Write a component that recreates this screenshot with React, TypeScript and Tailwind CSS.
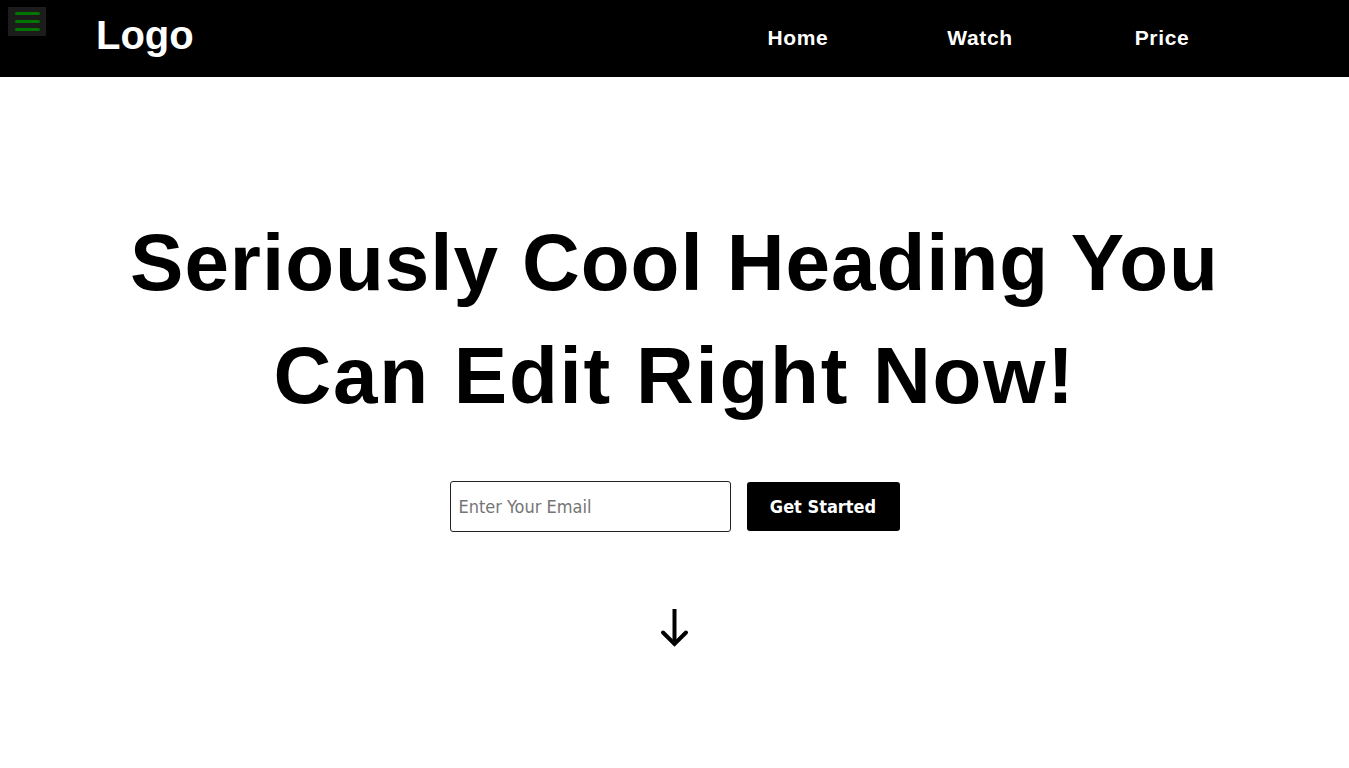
import React, { useState } from 'react'

// Landing hero: black header bar, big centered heading, email signup row, scroll arrow

const NAV_LINKS = ['Home', 'Watch', 'Price']

export default function App() {
  const [email, setEmail] = useState('')

  return (
    <div className="min-h-screen bg-white font-['Liberation_Sans',Arial,sans-serif]">
      {/* ── Header ─────────────────────────────────────────────── */}
      <header className="relative flex h-[77px] items-start justify-between bg-black px-[96px]">
        <button
          aria-label="Menu"
          className="absolute left-[8px] top-[7px] flex h-[29px] w-[38px] flex-col items-center justify-center gap-[5px] bg-[#1c1c1c]"
        >
          <span className="h-[3px] w-[25px] rounded-full bg-[#007400]" />
          <span className="h-[3px] w-[25px] rounded-full bg-[#007400]" />
          <span className="h-[3px] w-[25px] rounded-full bg-[#007400]" />
        </button>

        <div className="mt-[15px] text-[40px] font-bold leading-[40px] text-white">Logo</div>

        <nav className="mt-[27px] flex">
          {NAV_LINKS.map((link) => (
            <a
              key={link}
              href="#"
              className="w-[182px] text-center text-[21px] font-bold leading-[21px] tracking-[0.03em] text-white"
            >
              {link}
            </a>
          ))}
        </nav>
      </header>

      {/* ── Hero ───────────────────────────────────────────────── */}
      <main className="flex flex-col items-center pt-[129px]">
        <h1 className="text-center text-[80px] font-bold leading-[113px] text-black">
          <span className="block tracking-[0.012em]">Seriously Cool Heading You</span>
          <span className="block tracking-[0.022em]">Can Edit Right Now!</span>
        </h1>

        <form
          onSubmit={(e) => e.preventDefault()}
          className="mt-[49px] flex items-center gap-[16px] font-['DejaVu_Sans_Condensed','DejaVu_Sans',sans-serif]"
        >
          <input
            type="email"
            value={email}
            onChange={(e) => setEmail(e.target.value)}
            placeholder="Enter Your Email"
            className="h-[51px] w-[281px] rounded-[3px] border border-[#222] px-[8px] text-[18px] text-black placeholder:text-[#757575] focus:outline-none"
          />
          <button
            type="submit"
            className="h-[49px] w-[153px] rounded-[3px] bg-black text-[18px] font-bold text-white"
          >
            Get Started
          </button>
        </form>

        <div className="mt-[75px]">
          <svg width="30" height="40" viewBox="0 0 30 40" fill="none" aria-hidden>
            <path d="M14.5 2 V37" stroke="black" strokeWidth="4" />
            <path d="M3 25.5 L14.5 37 L26 25.5" stroke="black" strokeWidth="4" strokeLinecap="round" />
          </svg>
        </div>
      </main>
    </div>
  )
}
